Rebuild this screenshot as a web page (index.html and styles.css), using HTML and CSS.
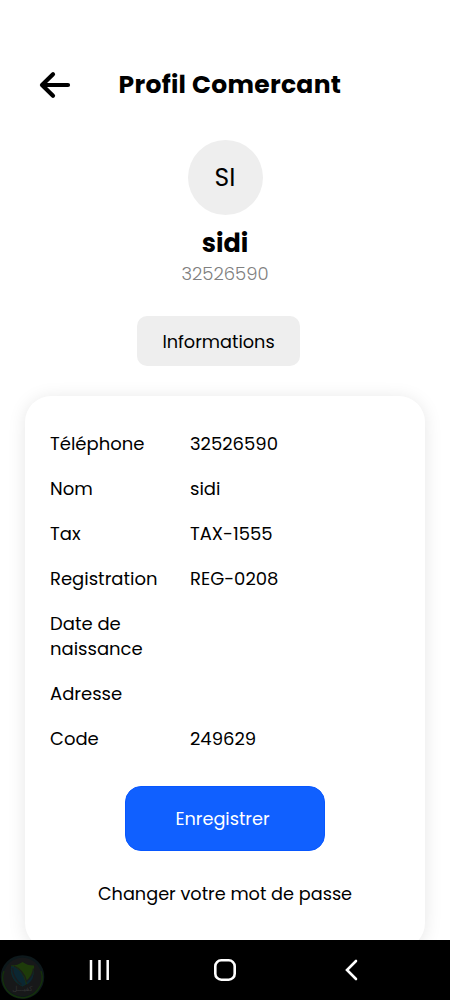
FILE: index.html
```
<!DOCTYPE html>
<html lang="fr">
<head>
<meta charset="utf-8">
<title>Profil Comercant</title>
<link rel="stylesheet" href="styles.css">
</head>
<body>
<div class="screen">
  <header class="header">
    <svg class="back" width="32" height="28" viewBox="0 0 32 28"><path d="M14 3.200 3 14l11 10.800M3.500 14h25.500" fill="none" stroke="#000" stroke-width="4.200" stroke-linecap="round" stroke-linejoin="round"/></svg>
    <h1 class="title">Profil Comercant</h1>
  </header>
  <section class="profile">
    <div class="avatar">SI</div>
    <h2 class="name">sidi</h2>
    <p class="phone">32526590</p>
  </section>
  <div class="tab">Informations</div>
  <main class="card">
    <dl class="rows">
      <div class="row"><dt>Téléphone</dt><dd>32526590</dd></div>
      <div class="row"><dt>Nom</dt><dd>sidi</dd></div>
      <div class="row"><dt>Tax</dt><dd>TAX-1555</dd></div>
      <div class="row"><dt>Registration</dt><dd>REG-0208</dd></div>
      <div class="row"><dt>Date de naissance</dt><dd></dd></div>
      <div class="row"><dt>Adresse</dt><dd></dd></div>
      <div class="row"><dt>Code</dt><dd>249629</dd></div>
    </dl>
    <button class="save">Enregistrer</button>
    <a class="password">Changer votre mot de passe</a>
  </main>
  <nav class="navbar">
    <svg class="watermark" width="46" height="46" viewBox="0 0 46 46">
      <circle cx="22.500" cy="23" r="20.500" fill="#171819" stroke="#0d181b" stroke-width="2.500"/>
      <path d="M4 17a19.500 19.500 0 0 0 34 18.500M41 17a19.500 19.500 0 0 1-3 18.500" fill="none" stroke="#15300b" stroke-width="1.500"/>
      <path d="M11 11.500c5 0 8-1 11.500-3.500 3.500 2.500 6.500 3.500 11.500 3.500 1 10-3 17-11.500 21C14 28.500 10 21.500 11 11.500z" fill="#1e3b0a"/>
      <path d="M11 12c6 1 13 7 15 18.500l-3.500 2C14 28.500 10 22 11 12z" fill="#0b2732"/>
      <path d="M33.500 15c-1 6-3 9-7 12.500.5 1.500.5 2.500 0 3.500 5-3 8-8 7-16z" fill="#0b2732"/>
      <path d="M12.500 14c.5 7 3.500 12.500 9 16.500M14 12c5 2 11 8 12.500 15.500 3.500-3 6.500-7 7-13" fill="none" stroke="#1b1d1d" stroke-width="1.300"/>
      <text class="brand" x="22.500" y="37" text-anchor="middle">كفيـــل</text>
    </svg>
    <svg class="recents" width="20" height="20" viewBox="0 0 20 20"><path d="M2 0v20M10.500 0v20M18.700 0v20" stroke="#fff" stroke-width="2.500"/></svg>
    <svg class="home" width="22" height="22" viewBox="0 0 22 22"><rect x="1.300" y="1.300" width="19.400" height="19.400" rx="6" fill="none" stroke="#fff" stroke-width="2.600"/></svg>
    <svg class="chevron" width="14" height="22" viewBox="0 0 14 22"><path d="M12 2 3 11l9 9" fill="none" stroke="#fff" stroke-width="2.600" stroke-linecap="round"/></svg>
  </nav>
</div>
</body>
</html>
```
FILE: styles.css
```
* { box-sizing: border-box; margin: 0; padding: 0; }
body {
  background: #fff;
  color: #000;
  font-family: Poppins, Inter, "Liberation Sans", sans-serif;
  font-size: 18px;
  line-height: 25px;
}
.screen { position: relative; width: 450px; height: 1000px; overflow: hidden; padding-top: 66px; display: flex; flex-direction: column; align-items: center; }
.header { width: 100%; height: 37px; display: flex; align-items: center; padding-left: 39px; }
.back { flex: none; }
.title { margin-left: 47.5px; font-size: 25px; font-weight: 700; line-height: 37px; letter-spacing: 0.3px; white-space: nowrap; }
.profile { display: flex; flex-direction: column; align-items: center; margin-top: 37px; }
.avatar { width: 75px; height: 75px; border-radius: 50%; background: #eee; font-size: 25px; line-height: 75px; text-align: center; }
.name { margin-top: 9px; font-size: 25.5px; line-height: 38px; font-weight: 700; }
.phone { margin-top: -1px; color: #808080; font-weight: 300; }
.tab { margin: 30px 13px 0 0; width: 163px; height: 50px; border-radius: 10px; background: #eee; font-size: 17.7px; line-height: 51px; text-align: center; }
.card { flex: none; margin-top: 30px; width: 400px; height: 553px; padding: 35px 25px; border-radius: 26px; background: #fff; box-shadow: 0 2px 18px rgba(0, 0, 0, 0.1); display: flex; flex-direction: column; align-items: center; }
.rows { width: 100%; display: flex; flex-direction: column; gap: 20px; }
.row { display: grid; grid-template-columns: 115px 1fr; column-gap: 25px; }
.save { margin-top: 35px; padding-right: 5px; width: 200px; height: 65px; border: 1px solid #0757ff; border-radius: 16px; background: #1060ff; color: #fff; font: inherit; font-size: 17.7px; }
.password { margin-top: 30px; font-size: 17.7px; white-space: nowrap; }
.navbar { position: absolute; left: 0; bottom: 0; width: 450px; height: 60px; background: #000; display: flex; align-items: center; }
.watermark { margin: 13px 43px 0 0; }
.brand { font-family: "DejaVu Sans", sans-serif; font-size: 7px; fill: #303132; }
.recents { margin-right: 105px; }
.home { margin-right: 108px; }
```
